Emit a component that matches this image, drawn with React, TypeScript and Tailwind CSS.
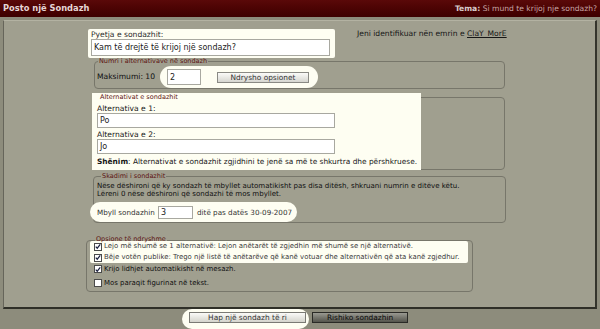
import type { ReactNode } from "react";

const body = "font-['DejaVu_Sans',sans-serif]";

function Legend({ children, className = "" }: { children: ReactNode; className?: string }) {
  return (
    <div
      className={`h-[8px] w-fit whitespace-nowrap px-[1px] text-[6.5px] leading-[8px] text-[#5b1111] ${className}`}
    >
      {children}
    </div>
  );
}

function TextBox({ value, className = "" }: { value: string; className?: string }) {
  return (
    <div
      className={`flex shrink-0 items-center border border-[#a8a8a0] bg-white pl-[2px] text-[8px] text-[#222] ${className}`}
    >
      {value}
    </div>
  );
}

function Check({ checked }: { checked: boolean }) {
  return (
    <span className="flex h-[8px] w-[8px] shrink-0 items-center justify-center border border-[#4a4a4a] bg-white">
      {checked && (
        <svg viewBox="0 0 8 8" className="h-[7px] w-[7px]">
          <path d="M1 4.2 L3 6.3 L7 1.2" fill="none" stroke="#1d2240" strokeWidth="1.6" />
        </svg>
      )}
    </span>
  );
}

function Option({ checked, text, muted }: { checked: boolean; text: string; muted?: boolean }) {
  return (
    <div className="flex items-center gap-[2px] whitespace-nowrap">
      <Check checked={checked} />
      <span className={muted ? "text-[#3c3c3c]" : "text-[#111]"}>{text}</span>
    </div>
  );
}

export default function App() {
  return (
    <div
      className={`flex h-[329px] w-[600px] flex-col overflow-hidden bg-[#8d8c7c] text-[7.6px] leading-[9px] text-[#161616] ${body}`}
    >
      <header className="flex h-[17px] shrink-0 items-center justify-between bg-gradient-to-b from-[#5a0909] to-[#3d0000] px-[3px]">
        <span className="text-[8.3px] font-bold text-[#e6d6d6]">Posto një Sondazh</span>
        <span className="text-[7.6px] text-[#c9a5a5]">
          <span className="font-bold text-[#d9cccc]">Tema:</span> Si mund te krijoj nje sondazh?
        </span>
      </header>

      <main className="mx-[3px] mt-[3px] h-[289px] shrink-0 border-t border-b-2 border-l border-r-2 border-t-[#b3b2a2] border-b-[#2f2f28] border-l-[#66655a] border-r-[#34342c] bg-[#a09f8f] pl-[82px]">
        <div className="flex items-start">
          <div className="ml-[2px] mt-[8px] h-[29px] w-[247px] rounded-[2px] bg-[#fefef2] px-[3px] pt-[1px]">
            <div className="text-[#2a2a2a]">Pyetja e sondazhit:</div>
            <TextBox value="Kam të drejtë të krijoj një sondazh?" className="h-[17px] w-[239px] text-[8.5px]" />
          </div>
          <div className="ml-[22px] mt-[8px] whitespace-nowrap">
            Jeni identifikuar nën emrin e <span className="underline">ClaY_MorE</span>
          </div>
        </div>

        <div className="ml-[8px] mt-[3px] w-[411px] rounded-[4px] border border-[#77766a]">
          <Legend className="-mt-[5px] ml-[3px] bg-[#a09f8f]">Numri i alternativave në sondazh</Legend>
          <div className="flex items-center">
            <span className="ml-[2px] w-[63px] whitespace-nowrap text-[#0f0f0f]">Maksimumi: 10</span>
            <div className="mt-[1px] flex h-[22px] items-center gap-[16px] rounded-full bg-[#fefef2] pl-[7px] pr-[9px]">
              <TextBox value="2" className="h-[16px] w-[34px]" />
              <button className="flex h-[11px] w-[92px] items-center justify-center border border-[#8a8a84] bg-gradient-to-b from-[#fbfbf8] to-[#d6d6d0] text-[7.4px] text-[#333]">
                Ndrysho opsionet
              </button>
            </div>
          </div>
        </div>

        <div className="ml-[6px] mt-[8px] w-[413px] rounded-[4px] border border-[#77766a]">
          <div className="-mb-[1px] -ml-[1px] -mt-[5px] h-[77px] w-[329px] bg-[#fefef2] pl-[5px]">
            <div className="ml-[3px] h-[8px] text-[6.5px] leading-[8px] text-[#5b1111]">Alternativat e sondazhit</div>
            <div className="mt-[3px]">Alternativa e 1:</div>
            <TextBox value="Po" className="h-[15px] w-[238px]" />
            <div className="mt-[2px]">Alternativa e 2:</div>
            <TextBox value="Jo" className="h-[15px] w-[238px]" />
            <div className="mt-[3px] whitespace-nowrap text-[7.4px]">
              <b>Shënim</b>: Alternativat e sondazhit zgjidhini te jenë sa më te shkurtra dhe përshkruese.
            </div>
          </div>
        </div>

        <div className="ml-[7px] mt-[6px] w-[413px] rounded-[4px] border border-[#77766a] pl-[3px]">
          <Legend className="-mt-[5px] ml-[4px] bg-[#a09f8f]">Skadimi i sondazhit</Legend>
          <div className="mt-[2px] whitespace-nowrap text-[7.05px] leading-[8px] text-[#0f0f0f]">
            <div>Nëse dëshironi që ky sondazh të mbyllet automatikisht pas disa ditësh, shkruani numrin e ditëve këtu.</div>
            <div>Lëreni 0 nëse dëshironi që sondazhi të mos mbyllet.</div>
          </div>
          <div className="-ml-[7px] mt-[4px] flex h-[20px] w-[207px] items-center whitespace-nowrap rounded-full bg-[#fefef2] pl-[7px] text-[7.2px] text-[#333]">
            <span className="w-[61px]">Mbyll sondazhin</span>
            <TextBox value="3" className="h-[13px] w-[35px]" />
            <span className="ml-[4px]">ditë pas datës 30-09-2007</span>
          </div>
        </div>

        <div className="mt-[17px] w-[387px] rounded-[4px] border border-[#77766a] pb-[2px] text-[6.95px]">
          <Legend className="-mb-[2px] -mt-[6px] ml-[8px] bg-[#a09f8f]">Opsione të ndryshme</Legend>
          <div className="ml-[3px] w-[378px] rounded-[2px] bg-[#fefef2] pl-[4px]">
            <div className="flex h-[11px] items-center">
              <Option
                checked
                muted
                text="Lejo më shumë se 1 alternativë: Lejon anëtarët të zgjedhin më shumë se një alternativë."
              />
            </div>
            <div className="flex h-[11px] items-center">
              <Option
                checked
                muted
                text="Bëje votën publike: Trego një listë të anëtarëve që kanë votuar dhe alternativën që ata kanë zgjedhur."
              />
            </div>
          </div>
          <div className="ml-[7px] flex h-[12px] items-center">
            <Option checked text="Krijo lidhjet automatikisht në mesazh." />
          </div>
          <div className="ml-[7px] mt-[2px] flex h-[12px] items-center">
            <Option checked={false} text="Mos paraqit figurinat në tekst." />
          </div>
        </div>
      </main>

      <footer className="flex flex-1 items-start pl-[182px]">
        <div className="flex h-[20px] items-start rounded-full bg-[#fefef2] pl-[7px] pr-[3px] pt-[3px]">
          <button className="flex h-[11px] w-[117px] items-center justify-center border border-[#7a7a74] bg-gradient-to-b from-[#fbfbf8] to-[#d4d4cc] text-[7.4px] text-[#333]">
            Hap një sondazh të ri
          </button>
        </div>
        <button className="ml-[3px] mt-[3px] flex h-[11px] w-[96px] items-center justify-center border border-[#2a2a26] bg-gradient-to-b from-[#9a9a92] to-[#54544c] text-[7.4px] text-[#0c0c0c]">
          Rishiko sondazhin
        </button>
      </footer>
    </div>
  );
}
